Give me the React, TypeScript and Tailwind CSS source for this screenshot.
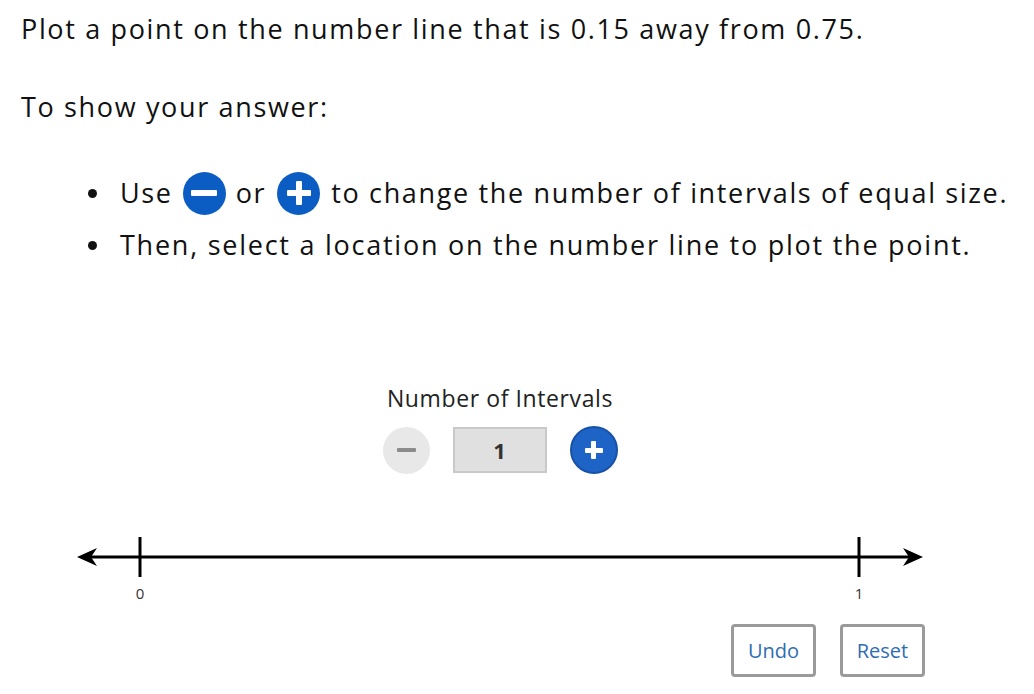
import React from "react";

const font = { fontFamily: '"Open Sans", "Noto Sans", sans-serif' };

function BlueMinus() {
  return (
    <span className="inline-flex items-center justify-center w-[43px] h-[43px] rounded-full bg-[#0b5dc4] align-middle mx-[10px]">
      <span className="block w-[26px] h-[6px] bg-white rounded-[1px]" />
    </span>
  );
}

function BluePlus() {
  return (
    <span className="relative inline-flex items-center justify-center w-[43px] h-[43px] rounded-full bg-[#0b5dc4] align-middle mx-[11px]">
      <span className="absolute w-[24px] h-[6px] bg-white rounded-[1px]" />
      <span className="absolute w-[6px] h-[24px] bg-white rounded-[1px]" />
    </span>
  );
}

export default function App() {
  return (
    <div
      className="w-[1034px] h-[694px] bg-white text-[#111] overflow-hidden flex flex-col"
      style={font}
    >
      <div className="pl-[21px] pt-[9px]">
        <p className="text-[27px] leading-[40px] tracking-[1.65px]">
          Plot a point on the number line that is 0.15 away from 0.75.
        </p>
        <p className="text-[27px] leading-[40px] mt-[38px] tracking-[1.65px]">
          To show your answer:
        </p>
        <ul className="mt-[40px]">
          <li className="flex items-center h-[52px] text-[27px] tracking-[1.65px]">
            <span className="w-[9px] h-[9px] rounded-full bg-[#111] ml-[67px] mr-[23px]" />
            <span className="flex items-center">
              Use
              <BlueMinus />
              or
              <BluePlus />
              to change the number of intervals of equal size.
            </span>
          </li>
          <li className="flex items-center h-[52px] text-[27px] tracking-[1.75px]">
            <span className="w-[9px] h-[9px] rounded-full bg-[#111] ml-[67px] mr-[23px]" />
            <span>Then, select a location on the number line to plot the point.</span>
          </li>
        </ul>
      </div>

      <div className="w-[1000px] flex flex-col items-center mt-[112px]">
        <div className="text-[23px] leading-[30px] text-[#222] tracking-[0.6px]">
          Number of Intervals
        </div>
        <div className="flex items-center gap-[23px] mt-[13px]">
          <button className="w-[47px] h-[47px] rounded-full bg-[#e8e8e8] flex items-center justify-center">
            <span className="block w-[19px] h-[4px] bg-[#8c8c8c] rounded-[1px]" />
          </button>
          <div className="w-[94px] h-[46px] bg-[#e0e0e0] border-[2px] border-[#c9c9c9] flex items-center justify-center text-[22px] font-bold text-[#333]">
            1
          </div>
          <button className="relative w-[48px] h-[48px] rounded-full bg-[#1e63c6] border-[2px] border-[#1852a8] flex items-center justify-center">
            <span className="absolute w-[18px] h-[5px] bg-white rounded-[1px]" />
            <span className="absolute w-[5px] h-[18px] bg-white rounded-[1px]" />
          </button>
        </div>
      </div>

      <div className="mt-[57px] pl-[70px]">
        <svg width="870" height="80" viewBox="0 0 870 80">
          <line x1="14" y1="26" x2="846" y2="26" stroke="#000" strokeWidth="3" />
          <path d="M7 26 L27 17 L21 26 L27 35 Z" fill="#000" />
          <path d="M853 26 L833 17 L839 26 L833 35 Z" fill="#000" />
          <line x1="70" y1="6" x2="70" y2="46" stroke="#000" strokeWidth="3" />
          <line x1="789" y1="6" x2="789" y2="46" stroke="#000" strokeWidth="3" />
          <text x="70" y="68" textAnchor="middle" fontSize="15" fill="#333" fontFamily='"Open Sans", sans-serif'>0</text>
          <text x="789" y="68" textAnchor="middle" fontSize="15" fill="#333" fontFamily='"Open Sans", sans-serif'>1</text>
        </svg>
      </div>

      <div className="flex gap-[24px] pl-[731px] mt-[13px]">
        <button className="w-[85px] h-[53px] border-[3px] border-[#9a9a9a] rounded-[4px] bg-white text-[20px] text-[#2f6db3] flex items-center justify-center">
          Undo
        </button>
        <button className="w-[85px] h-[53px] border-[3px] border-[#9a9a9a] rounded-[4px] bg-white text-[20px] text-[#2f6db3] flex items-center justify-center">
          Reset
        </button>
      </div>
    </div>
  );
}
